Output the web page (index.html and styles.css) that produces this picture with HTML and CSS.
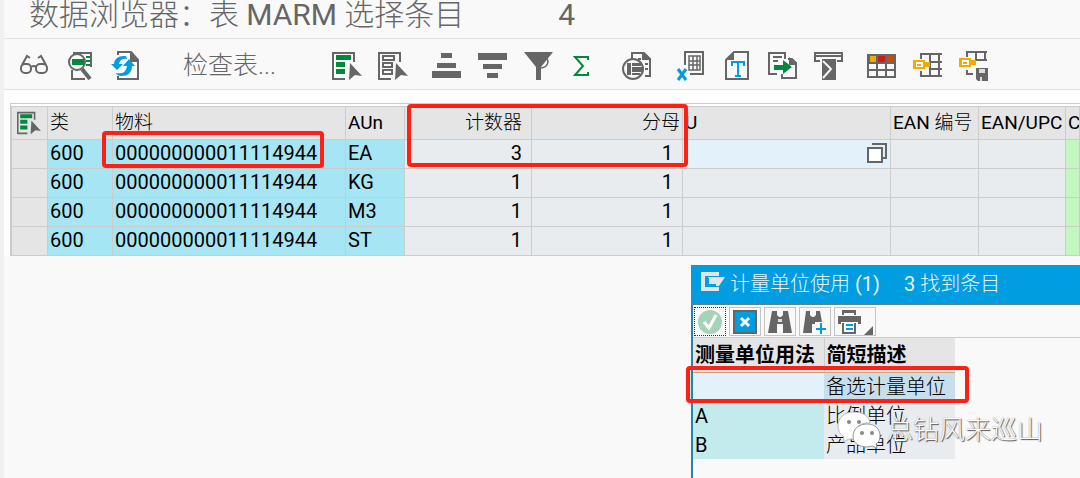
FILE: index.html
```html
<!DOCTYPE html>
<html lang="zh-CN">
<head>
<meta charset="utf-8">
<title>数据浏览器</title>
<link rel="stylesheet" href="styles.css">
</head>
<body>
<svg class="defs" aria-hidden="true">
  <symbol id="select-all" viewBox="0 0 30 30">
    <path d="M22 11V2H1v26h12" fill="none" stroke="#666" stroke-width="2"/>
    <path d="M4 4h15v5H4zM4 11h9v5H4zM4 18h9v5H4z" fill="#00893d"/>
    <path d="M18 12l12 13-7-1-6 5z" fill="#666"/>
  </symbol>
</svg>
<div class="app">
  <header class="title">
    <h1>数据浏览器：表 <b>MARM</b> 选择条目</h1><span>4</span>
  </header>

  <nav class="toolbar">
    <div class="group">
      <button aria-label="显示"><svg viewBox="0 0 30 30"><g fill="none" stroke="#666" stroke-width="2"><rect x="2" y="13" width="10" height="9" rx="4"/><rect x="17" y="13" width="11" height="9" rx="4"/><path d="M12 16q3-2 5 0M3 14L8 5l3 2M27 14L22 5l-3 2"/></g></svg></button>
      <button aria-label="选择"><svg viewBox="0 0 30 30"><path d="M8 2h18v14M7 19v9h13" fill="none" stroke="#666" stroke-width="2"/><path d="M21 5h4v2h-4zM21 9h4v2h-4zM21 13h4v2h-4z" fill="#00893d"/><circle cx="12" cy="11" r="8" fill="#f9f9f9" stroke="#666" stroke-width="2"/><path d="M7 8h12v6H7z" fill="#00893d"/><path d="M17 18l8 10" stroke="#666" stroke-width="4"/></svg></button>
      <button aria-label="刷新"><svg viewBox="0 0 30 30"><path d="M7 4V1h13l7 8v19H7v-3" fill="none" stroke="#666" stroke-width="2"/><path d="M19 1v10h9z" fill="#666"/><path d="M3 13q1-9 12-8l1 3q-7-1-8 5h4l-6 6-6-6zM12 15l6-7 6 7h-3q0 10-11 10-4 0-5-3 10 2 11-7z" fill="#009de0"/></svg></button>
    </div>
    <button class="text-button">检查表...</button>
    <div class="group">
      <button aria-label="全选"><svg><use href="#select-all"/></svg></button>
      <button aria-label="取消全选"><svg viewBox="0 0 30 30"><path d="M22 11V2H1v26h12" fill="none" stroke="#666" stroke-width="2"/><path d="M5 5h11v4H5zM5 12h9v4H5zM5 19h9v4H5z" fill="none" stroke="#666" stroke-width="2"/><path d="M18 12l12 13-7-1-6 5z" fill="#666"/></svg></button>
    </div>
    <div class="group">
      <button aria-label="升序排序"><svg viewBox="0 0 30 30"><path d="M9 2h11v5H9zM5 12h19v5H5zM0 20h29v7H0z" fill="#666"/></svg></button>
      <button aria-label="降序排序"><svg viewBox="0 0 30 30"><path d="M0 2h29v7H0zM5 13h19v5H5zM9 22h11v5H9z" fill="#666"/></svg></button>
      <button aria-label="过滤"><svg viewBox="0 0 30 30"><path d="M0 1h29L17 16v13h-5V16z" fill="#666"/><path d="M19 7q5-1 5 4-1 6-8 6" fill="none" stroke="#666" stroke-width="1.5"/></svg></button>
    </div>
    <button aria-label="合计"><svg viewBox="0 0 30 30"><path d="M20 9V6H7l8 9-8 9h13v-3" fill="none" stroke="#00893d" stroke-width="2"/></svg></button>
    <button class="after-sum" aria-label="打印预览"><svg viewBox="0 0 30 30"><path d="M10 8V2h12l6 6v17h-5" fill="none" stroke="#666" stroke-width="2"/><path d="M20 1v8h9zM16 7h3v2h-3zM23 12h3v2h-3zM23 17h3v2h-3z" fill="#666"/><circle cx="11" cy="18" r="10" fill="#f9f9f9" stroke="#666" stroke-width="2"/><path d="M5 12h4v12H5zM10 12h9v3h-9zM10 16h11v5H10zM10 22h8v2h-8z" fill="#666"/></svg></button>
    <div class="group">
      <button aria-label="导出到表格"><svg viewBox="0 0 30 30"><path d="M9 14V1h18v22H14" fill="none" stroke="#666" stroke-width="2"/><path d="M13 5h11v14H13zM13 10h11M13 14h11M17 5v14M21 5v14" fill="none" stroke="#666" stroke-width="1.5"/><path d="M2 18l8 11M10 18L2 29" stroke="#009de0" stroke-width="3"/></svg></button>
      <button aria-label="文本"><svg viewBox="0 0 30 30"><path d="M12 1h14v27H4V9z" fill="none" stroke="#666" stroke-width="2"/><path d="M12 1v8H4z" fill="#666"/><path d="M10 15v-4h12v4M16 11v14M13 25h6" fill="none" stroke="#009de0" stroke-width="2"/></svg></button>
      <button aria-label="本地文件"><svg viewBox="0 0 30 30"><path d="M17 8V2H1v21h8M5 6h9M5 10h5M20 8h4l4 4v15H14v-4" fill="none" stroke="#666" stroke-width="2"/><path d="M21 6l8 8h-8z" fill="#666"/><path d="M6 14h9V9l9 7-9 7v-4H6z" fill="#00893d"/></svg></button>
      <button aria-label="布局"><svg viewBox="0 0 30 30"><path d="M6 10H1V2h27v8h-5M1 5h27" fill="none" stroke="#666" stroke-width="2"/><path d="M8 8h14v21H8z" fill="#666"/><path d="M9 10l8 8-8 9" fill="none" stroke="#f9f9f9" stroke-width="2"/></svg></button>
    </div>
    <div class="group">
      <button aria-label="更改布局"><svg viewBox="0 0 30 30"><path d="M1 3h29v24H1z" fill="#666"/><path d="M4 5h6v6H4z" fill="#f0ab00"/><path d="M12 5h7v6h-7z" fill="#cc1919"/><path d="M21 5h7v6h-7z" fill="#d04b00"/><path d="M3 13h7v5H3zM12 13h7v5h-7zM21 13h7v5h-7zM3 20h7v5H3zM12 20h7v5h-7zM21 20h7v5h-7z" fill="#f9f9f9"/></svg></button>
      <button aria-label="选择布局"><svg viewBox="0 0 30 30"><path d="M9 8V3h21M9 20v5h21M18 3v22M27 3v22M18 11h12M18 18h12" fill="none" stroke="#666" stroke-width="2"/><path d="M1 9h12v9H1zM12 11h6v5h-6z" fill="#f0ab00"/><path d="M4 11h7v5H4z" fill="#fff"/><path d="M5 13h4v2H5z" fill="#f0ab00"/></svg></button>
      <button aria-label="保存布局"><svg viewBox="0 0 30 30"><path d="M9 6V1h20M18 1v8h11M27 1v8M9 19v4h6" fill="none" stroke="#666" stroke-width="2"/><path d="M1 7h12v9H1zM12 9h6v5h-6z" fill="#f0ab00"/><path d="M4 9h7v5H4z" fill="#fff"/><path d="M5 11h4v2H5z" fill="#f0ab00"/><path d="M18 17h12v13H20l-2-2z" fill="#666"/><path d="M21 18h6v4h-6zM22 26h2v4h-2z" fill="#ddd"/></svg></button>
    </div>
  </nav>

  <main>
    <div class="grid-frame">
      <table class="grid">
        <colgroup><col class="c-sel"><col class="c-client"><col class="c-mat"><col class="c-unit"><col class="c-num"><col class="c-den"><col class="c-u"><col class="c-ean"><col class="c-upc"><col></colgroup>
        <thead><tr><th><svg class="select-icon"><use href="#select-all"/></svg></th><th class="zh">类</th><th class="zh">物料</th><th>AUn</th><th class="zh num">计数器</th><th class="zh den">分母</th><th>U</th><th>EAN <span class="zh">编号</span></th><th>EAN/UPC</th><th>C</th></tr></thead>
        <tbody>
          <tr><td></td><td class="key">600</td><td class="key">000000000011114944</td><td class="key">EA</td><td class="num">3</td><td class="num">1</td><td class="active"><button class="help" aria-label="输入帮助"><svg viewBox="0 0 22 22"><path d="M6 2h14v14h-3" fill="none" stroke="#666" stroke-width="2"/><path d="M2 6h14v14H2z" fill="#fff" stroke="#666" stroke-width="2"/></svg></button></td><td></td><td></td><td class="green"></td></tr>
          <tr><td></td><td class="key">600</td><td class="key">000000000011114944</td><td class="key">KG</td><td class="num">1</td><td class="num">1</td><td></td><td></td><td></td><td class="green"></td></tr>
          <tr><td></td><td class="key">600</td><td class="key">000000000011114944</td><td class="key">M3</td><td class="num">1</td><td class="num">1</td><td></td><td></td><td></td><td class="green"></td></tr>
          <tr><td></td><td class="key">600</td><td class="key">000000000011114944</td><td class="key">ST</td><td class="num">1</td><td class="num">1</td><td></td><td></td><td></td><td class="green"></td></tr>
        </tbody>
      </table>
      <span class="mark mark-material"></span>
      <span class="mark mark-factor"></span>
    </div>
  </main>

  <section class="dialog" aria-label="计量单位使用">
    <header class="dialog-title">
      <svg viewBox="0 0 24 20"><path d="M16 4V2H2v15h14v-2" fill="none" stroke="#e4e4e4" stroke-width="4"/><path d="M7 5h17l-6 9H7z" fill="#e4e4e4"/><path d="M7 6v7h8" fill="none" stroke="#009de0" stroke-width="2"/></svg>
      <span><span class="zh">计量单位使用</span> (1)</span><span class="found">3 <span class="zh">找到条目</span></span>
    </header>
    <div class="dialog-tools">
      <button class="focused" aria-label="确定"><svg viewBox="0 0 28 26"><circle cx="14" cy="13" r="12" fill="#a5d3b6"/><path d="M8 13l5 6 7-13" fill="none" stroke="#fff" stroke-width="3"/></svg></button>
      <button aria-label="取消"><svg viewBox="0 0 28 26"><path d="M3 2h22v22H3z" fill="#009de0" stroke="#666" stroke-width="2"/><path d="M10 9l8 8M18 9l-8 8" stroke="#fff" stroke-width="3"/></svg></button>
      <button aria-label="查找"><svg viewBox="0 0 28 26"><path d="M6 2h5v4l2 2h2l2-2V2h5l4 22h-9v-9h-6v9H2z" fill="#666"/><path d="M12 10h4v3h-4z" fill="#ddd"/></svg></button>
      <button aria-label="查找下一个"><svg viewBox="0 0 28 26"><path d="M5 2h4v4l2 2h2l2-2V2h4l2 11h-7v2h-3v9H2z" fill="#666"/><path d="M20 14v11M15 20h10" stroke="#009de0" stroke-width="2"/></svg></button>
      <button class="print" aria-label="打印"><svg viewBox="0 0 28 26"><path d="M6 1h14v5h-2V4H8v2H6zM2 7h23v8h-3v-2H5v2H2z" fill="#666"/><path d="M7 14v10h12V14" fill="none" stroke="#666" stroke-width="2"/><path d="M10 16h7M10 20h7" stroke="#009de0" stroke-width="2"/></svg><svg class="corner" viewBox="0 0 10 10"><path d="M10 0v10H0z" fill="#666"/></svg></button>
    </div>
    <div class="hits-frame">
      <table class="hits">
        <thead><tr><th>测量单位用法</th><th>简短描述</th></tr></thead>
        <tbody>
          <tr class="selected"><td></td><td class="zh">备选计量单位</td></tr>
          <tr><td>A</td><td class="zh">比例单位</td></tr>
          <tr><td>B</td><td class="zh">产品单位</td></tr>
        </tbody>
      </table>
      <span class="mark mark-hit"></span>
      <div class="watermark">
        <svg viewBox="0 0 44 38"><path d="M17 1C7 1 1 7 1 15c0 5 2 8 6 11l-1 5 6-3h6c-3-10 5-17 15-16C32 5 26 1 17 1z" fill="#fff" stroke="#bbb"/><path d="M30 13c-8 0-14 5-14 12s6 11 14 11l5-1 5 2-1-4c3-2 4-5 4-8 0-7-5-12-13-12z" fill="#fff" stroke="#999"/><g fill="#888"><circle cx="12" cy="11" r="2"/><circle cx="22" cy="11" r="2"/><circle cx="25" cy="22" r="2"/><circle cx="35" cy="22" r="2"/></g></svg>
        <span>总钻风来巡山</span>
      </div>
    </div>
  </section>
</div>
</body>
</html>
```
FILE: styles.css
```css
* { box-sizing: border-box; }
body {
  margin: 0;
  background: #f9f9f9;
  font-family: Roboto, "Noto Sans CJK SC", sans-serif;
  font-size: 20px;
  color: #000;
}
button {
  padding: 0;
  border: 0;
  background: none;
  font: inherit;
  color: inherit;
}
svg { display: block; }
.zh { font-weight: 300; }
.defs { position: absolute; width: 0; height: 0; }
.app {
  position: relative;
  min-height: 100vh;
  border-left: 4px solid #f0f0f0;
  overflow: hidden;
}
.title {
  display: flex;
  gap: 94px;
  height: 39px;
  padding-left: 25px;
  border-bottom: 1px solid #e2e2e2;
  font-size: 30px;
  line-height: 30px;
  color: #666;
}
.title h1 {
  margin: 0;
  font-size: inherit;
  font-weight: 300;
  white-space: nowrap;
}
.title b { font-weight: 400; }
.toolbar {
  display: flex;
  align-items: center;
  height: 51px;
  padding: 3px 0 0 15px;
  border-bottom: 1px solid #e2e2e2;
  color: #666;
}
.toolbar button svg { width: 30px; height: 30px; }
.group { display: flex; gap: 16px; margin-right: 24px; }
.group:nth-of-type(3) { margin-right: 14px; }
.group:nth-of-type(4) { margin-right: 22px; }
.toolbar .text-button {
  width: 149px;
  margin-left: 18px;
  font-size: 25px;
  font-weight: 300;
  line-height: 30px;
  text-align: left;
}
.toolbar .after-sum { margin: 0 24px; }
main { padding: 13px 0 0 6px; background: #fefefe; }
.grid-frame {
  position: relative;
  padding-top: 2px;
  border: solid #ccc;
  border-width: 1px 0 0 1px;
}
table { border-collapse: collapse; }
.grid { width: 100%; table-layout: fixed; }
.grid th, .grid td {
  height: 29px;
  padding: 0 2px 2px;
  border: 1px solid #ccc;
  background: #e8ecef;
  font-weight: 400;
  line-height: 24px;
  text-align: left;
  white-space: nowrap;
  overflow: hidden;
}
.grid th { height: 33px; padding-bottom: 0; background: #e5e5e5; font-size: 19px; }
.grid th.zh { font-weight: 300; }
.grid td:first-child { background: #e5e5e5; }
.grid td.key { background: #a6e5f3; }
.grid td.green { background: #c3f7c0; }
.grid td.active { background: #e3f1fa; }
.grid .num { padding-right: 9px; text-align: right; }
.grid .den { text-align: right; }
.c-sel { width: 36px; }
.c-client { width: 65px; }
.c-mat { width: 233px; }
.c-unit { width: 59px; }
.c-num { width: 127px; }
.c-den { width: 151px; }
.c-u { width: 208px; }
.c-ean { width: 88px; }
.c-upc { width: 87px; }
.select-icon { width: 24px; height: 24px; margin-left: 3px; }
.help { display: block; margin-left: auto; }
.help svg { width: 22px; height: 22px; }
.mark {
  position: absolute;
  border: 4px solid #ff2015;
  border-radius: 4px;
}
.mark-material { left: 91px; top: 27px; width: 222px; height: 37px; }
.mark-factor { left: 396px; top: 0; width: 281px; height: 63px; }
.dialog {
  position: absolute;
  top: 265px;
  right: 0;
  bottom: 0;
  left: 687px;
  border-left: 2px solid #2584ad;
  background: #f9f9f9;
}
.dialog-title {
  display: flex;
  align-items: center;
  height: 40px;
  margin-left: -2px;
  padding: 0 0 4px 10px;
  border-bottom: 2px solid #60808c;
  background: #009de0;
  color: #e8f4fa;
}
.dialog-title svg { width: 24px; height: 20px; margin-right: 5px; }
.found { margin-left: 24px; }
.dialog-tools { display: flex; gap: 3px; padding: 2px 0 1px 1px; }
.dialog-tools button {
  width: 32px;
  height: 29px;
  padding: 0 1px;
  border: 1px solid #c4c4c4;
}
.dialog-tools button svg { width: 28px; height: 26px; }
.dialog-tools .focused { border: 1px dotted #333; }
.dialog-tools .print {
  display: flex;
  align-items: flex-end;
  width: 42px;
}
.dialog-tools .print .corner { width: 9px; height: 9px; }
.hits-frame { position: relative; border-top: 1px solid #ccc; }
.hits { table-layout: fixed; width: 262px; }
.hits th, .hits td {
  height: 29px;
  padding: 0 2px;
  background: #e8ecef;
  line-height: 24px;
  text-align: left;
  white-space: nowrap;
}
.hits th {
  height: 34px;
  background: #e5e5e5;
  border-bottom: 1px solid #df9b70;
}
.hits th + th { border-left: 1px solid #ccc; }
.hits td:first-child { background: #c3eaec; }
.hits .selected td { background: #c8dfeb; }
.hits .selected td:first-child { background: #e3f1fa; }
.mark-hit { left: -7px; top: 28px; width: 283px; height: 37px; }
.watermark {
  position: absolute;
  left: 144px;
  top: 72px;
  display: flex;
  align-items: center;
  gap: 6px;
  font-size: 26px;
  font-weight: 300;
  line-height: 40px;
  color: #fff;
  text-shadow: 1px 1px 1px #555, 0 0 1px #888;
  white-space: nowrap;
}
.watermark svg { width: 44px; height: 38px; }
```
